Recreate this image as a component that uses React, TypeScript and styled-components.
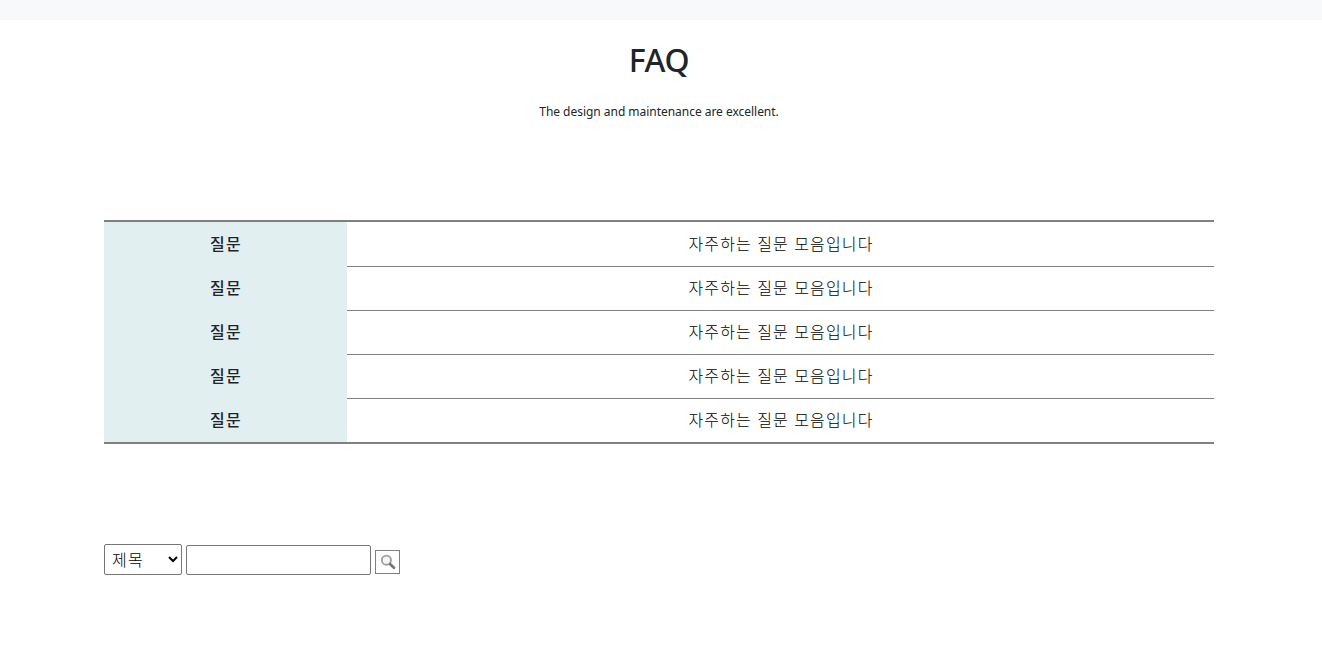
import React from "react";
import styled, { createGlobalStyle } from "styled-components";

const GlobalStyle = createGlobalStyle`
  *, *::before, *::after { box-sizing: border-box; }
  body {
    margin: 0;
    background: #fff;
    color: #212529;
    font-family: "Noto Sans", "Noto Sans CJK KR", sans-serif;
    font-size: 16px;
    line-height: 24px;
  }
`;

const TopBar = styled.div`
  height: 20px;
  background: #f8f9fb;
`;

const Container = styled.main`
  width: 1110px;
  margin-left: 104px;
`;

const Heading = styled.header`
  height: 200px;
  padding-top: 20px;
  text-align: center;
`;

const Title = styled.h1`
  margin: 0;
  font-size: 32px;
  font-weight: 500;
  line-height: 40px;
  letter-spacing: -0.4px;
`;

const Subtitle = styled.p`
  margin: 23px 0 0;
  font-size: 12px;
  line-height: 18px;
  letter-spacing: -0.03px;
`;

const FaqList = styled.dl`
  margin: 0;
  border-top: 2px solid #808080;
  border-bottom: 2px solid #808080;
`;

const FaqRow = styled.div`
  display: grid;
  grid-template-columns: 243px 1fr;
  height: 44px;
  line-height: 44px;
  text-align: center;
`;

const Question = styled.dt`
  padding-left: 1px;
  background: #e2eff1;
  font-weight: 500;
  letter-spacing: 1.3px;
`;

const Answer = styled.dd<{ $divided: boolean }>`
  margin: 0;
  padding-left: 1px;
  letter-spacing: 1.15px;
  font-weight: 300;
  color: #000;
  box-shadow: ${(p) => (p.$divided ? "inset 0 1px #808080" : "none")};
`;

const SearchForm = styled.form`
  display: flex;
  align-items: flex-end;
  margin-top: 100px;
`;

const Field = styled.select`
  width: 78px;
  height: 31px;
  margin: 0 4px 0 0;
  padding: 0 1px 0 3px;
  border: 1px solid #767676;
  border-radius: 2px;
  background-color: #fff;
  color: #000;
  font: inherit;
  font-weight: 300;
  letter-spacing: 1.3px;
`;

const Keyword = styled.input`
  width: 185px;
  height: 30px;
  margin: 0 4px 0 0;
  padding: 1px 2px;
  border: 1px solid #767676;
  border-radius: 2px;
  font: inherit;
`;

const SearchButton = styled.button`
  display: flex;
  width: 25px;
  height: 24px;
  margin: 0 0 1px;
  padding: 3px 0 0 4px;
  border: 1px solid #808080;
  background: #fff;
`;

const entries = Array.from({ length: 5 }, () => ({
  question: "질문",
  answer: "자주하는 질문 모음입니다",
}));

function Magnifier() {
  return (
    <svg width="17" height="17" viewBox="0 0 17 17" fill="none">
      <circle cx="6.4" cy="6.2" r="4.6" fill="#f4f5f6" stroke="#a0a0a0" strokeWidth="1.9" />
      <path d="M10 9.9 14 13.8" stroke="#777" strokeWidth="2.8" strokeLinecap="round" />
    </svg>
  );
}

export default function App() {
  return (
    <>
      <GlobalStyle />
      <TopBar />
      <Container>
        <Heading>
          <Title>FAQ</Title>
          <Subtitle>The design and maintenance are excellent.</Subtitle>
        </Heading>
        <FaqList>
          {entries.map((entry, i) => (
            <FaqRow key={i}>
              <Question>{entry.question}</Question>
              <Answer $divided={i > 0}>{entry.answer}</Answer>
            </FaqRow>
          ))}
        </FaqList>
        <SearchForm onSubmit={(e) => e.preventDefault()}>
          <Field>
            <option>제목</option>
          </Field>
          <Keyword type="text" />
          <SearchButton type="submit">
            <Magnifier />
          </SearchButton>
        </SearchForm>
      </Container>
    </>
  );
}
